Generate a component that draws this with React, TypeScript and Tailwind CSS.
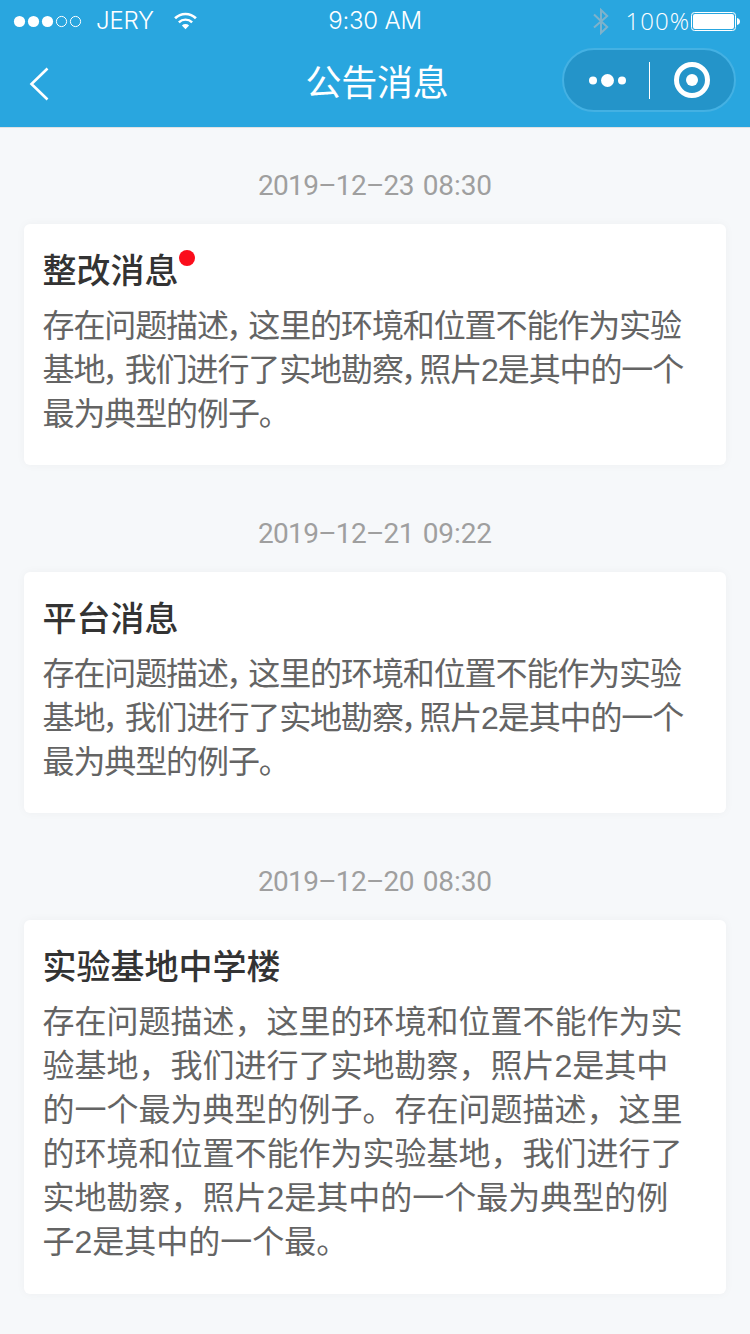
import { Fragment } from "react";

type Message = {
  date: string;
  clock: string;
  title: string;
  unread?: boolean;
  compact?: boolean;
  lines: string[];
};

const shortBody = [
  "存在问题描述，这里的环境和位置不能作为实验",
  "基地，我们进行了实地勘察，照片2是其中的一个",
  "最为典型的例子。",
];

const messages: Message[] = [
  { date: "2019–12–23", clock: "08:30", title: "整改消息", unread: true, compact: true, lines: shortBody },
  { date: "2019–12–21", clock: "09:22", title: "平台消息", compact: true, lines: shortBody },
  {
    date: "2019–12–20",
    clock: "08:30",
    title: "实验基地中学楼",
    lines: [
      "存在问题描述，这里的环境和位置不能作为实",
      "验基地，我们进行了实地勘察，照片2是其中",
      "的一个最为典型的例子。存在问题描述，这里",
      "的环境和位置不能作为实验基地，我们进行了",
      "实地勘察，照片2是其中的一个最为典型的例",
      "子2是其中的一个最。",
    ],
  },
];

function StatusBar() {
  return (
    <div className="flex h-[42px] items-center text-2xl leading-none font-light">
      <div className="flex flex-1 items-center">
        <svg className="ml-[13px]" width="70" height="14" viewBox="0 0 70 14">
          <circle cx="6.5" cy="7.5" r="5.6" fill="white" />
          <circle cx="20.5" cy="7.5" r="5.6" fill="white" />
          <circle cx="34.5" cy="7.5" r="5.6" fill="white" />
          <circle cx="48.5" cy="7.5" r="5.1" fill="none" stroke="white" />
          <circle cx="62.5" cy="7.5" r="5.1" fill="none" stroke="white" />
        </svg>
        <span className="ml-[13px] w-[61px] font-['Inter',sans-serif] tracking-[-0.2px]">JERY</span>
        <svg className="ml-[17px]" width="23" height="18" viewBox="0 0 24 19" fill="none" stroke="white">
          <path d="M1 6.6a15.6 15.6 0 0 1 22 0" strokeWidth="2.8" />
          <path d="M5 10.9a10 10 0 0 1 14 0" strokeWidth="2.6" />
          <path d="M12 18.2 8.2 14.2a5.5 5.5 0 0 1 7.6 0z" fill="white" stroke="none" />
        </svg>
      </div>
      <span className="font-['Inter',sans-serif] tracking-[-0.2px]">9:30 AM</span>
      <div className="flex flex-1 items-center justify-end">
        <svg width="16" height="27" viewBox="0 0 16 27" fill="none" stroke="#7fb2cb" strokeWidth="2">
          <path d="M1 6.5 14.2 19 8 25V2l6.2 6L1 19.5" />
        </svg>
        <span className="mb-px ml-[17px] font-['Open_Sans',sans-serif] font-[360] tracking-[1px]">100%</span>
        <svg className="mr-[10px]" width="50" height="20" viewBox="0 0 50 20">
          <rect x="1.5" y="1.5" width="44" height="18" rx="3" fill="none" stroke="white" />
          <rect x="3" y="3" width="41" height="15" rx="2" fill="white" />
          <path d="M47 7c2 .3 3 1.600 3 3.500s-1 3.200-3 3.500z" fill="white" />
        </svg>
      </div>
    </div>
  );
}

function NavBar() {
  return (
    <div className="flex h-[84px] items-start">
      <div className="flex-1">
        <svg className="mt-[25px] ml-[29px]" width="21" height="34" viewBox="0 0 21 34" fill="none" stroke="white" strokeWidth="2.6">
          <path d="M18.500 1.500 2.500 17 18.500 32.500" />
        </svg>
      </div>
      <h1 className="mt-4 ml-1 text-[36px] leading-[52px] tracking-[-0.3px]">公告消息</h1>
      <div className="flex flex-1 justify-end">
        <div className="mt-1.5 mr-3.5 flex h-16 w-[174px] items-center rounded-full border-2 border-[#44b1e3] bg-[#2494c9]">
          <svg className="ml-[24px]" width="40" height="16" viewBox="0 0 40 16" fill="white">
            <circle cx="5" cy="8.500" r="4" />
            <circle cx="19.500" cy="8.500" r="6.500" />
            <circle cx="34" cy="8.500" r="4" />
          </svg>
          <span className="ml-[21px] h-[37px] w-px bg-white" />
          <svg className="ml-6" width="36" height="36" viewBox="0 0 36 36">
            <circle cx="18" cy="18" r="15.500" fill="none" stroke="white" strokeWidth="5" />
            <circle cx="18" cy="18" r="6" fill="white" />
          </svg>
        </div>
      </div>
    </div>
  );
}

// Compact text uses half-width commas with a small gap after each
function Line({ text, compact }: { text: string; compact?: boolean }) {
  if (!compact) return <p className="whitespace-nowrap">{text}</p>;
  return (
    <p className="whitespace-nowrap">
      {text.split("，").map((part, i) => (
        <Fragment key={i}>
          {i > 0 && (
            <span
              className={
                i === 1
                  ? "-ml-[2px] mr-[7.5px] [font-feature-settings:'halt']"
                  : "-ml-[2px] mr-[3.5px] [font-feature-settings:'halt']"
              }
            >
              ，
            </span>
          )}
          {part}
        </Fragment>
      ))}
    </p>
  );
}

function MessageCard({ message }: { message: Message }) {
  return (
    <section>
      <time className="flex h-[97px] justify-center gap-[9px] pt-[41px] font-['Roboto',sans-serif] text-[28px] leading-9 text-[#9f9f9f]">
        <span className="tracking-[-0.7px]">{message.date}</span>
        <span className="tracking-[-0.1px]">{message.clock}</span>
      </time>
      <article
        className={
          message.compact
            ? "mx-6 rounded-md bg-white pt-[22px] pr-[18px] pb-[29px] pl-[18.5px] shadow-[0_0_10px_rgba(0,0,0,0.04)]"
            : "mx-6 rounded-md bg-white pt-[22px] pr-[18px] pb-[30px] pl-[18.5px] shadow-[0_0_10px_rgba(0,0,0,0.04)]"
        }
      >
        <div className="flex items-start">
          <h2 className="text-[34px] leading-[50px] font-medium text-[#333]">{message.title}</h2>
          {message.unread && <span className="mt-1 ml-[0.5px] size-4 rounded-full bg-[#fb0d1b]" />}
        </div>
        <div
          className={
            message.compact
              ? "mt-2 text-[32px] leading-[44px] tracking-[-1.1px] text-[#646464]"
              : "mt-2 text-[32px] leading-[44px] text-[#646464]"
          }
        >
          {message.lines.map((line) => (
            <Line key={line} text={line} compact={message.compact} />
          ))}
        </div>
      </article>
    </section>
  );
}

export default function App() {
  return (
    <div className="h-[1334px] w-[750px] overflow-hidden bg-[#f6f8fa] font-['Liberation_Sans','Noto_Sans_CJK_SC',sans-serif]">
      <header className="h-[127px] bg-[#29a6df] text-white shadow-[0_1px_0_#dfe2e4]">
        <StatusBar />
        <NavBar />
      </header>
      <main className="flex flex-col gap-2.5">
        {messages.map((message) => (
          <MessageCard key={message.date} message={message} />
        ))}
      </main>
    </div>
  );
}
